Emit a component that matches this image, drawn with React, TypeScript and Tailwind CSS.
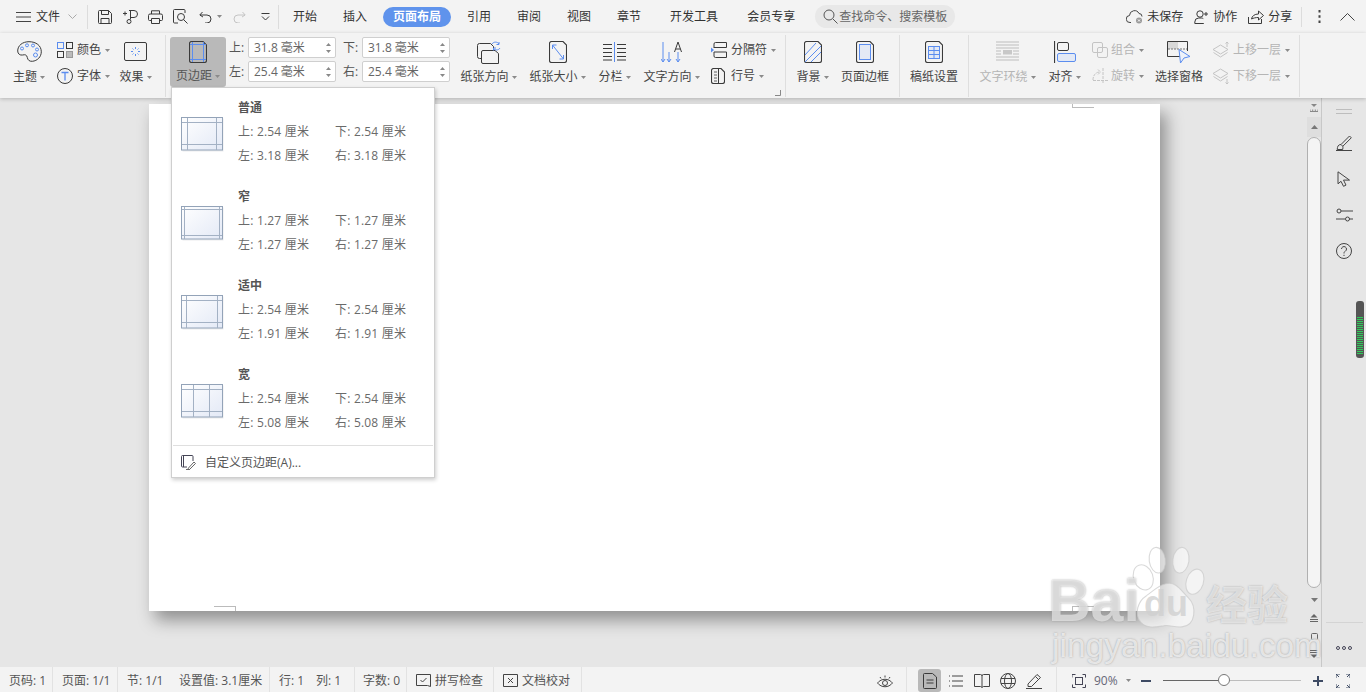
import React from "react";

const B = "#5b8def";
const D = "#3a3a3a";

function Ic({ w, h, children, className = "" }: { w: number; h: number; children: React.ReactNode; className?: string }) {
  return (
    <svg width={w} height={h} viewBox={`0 0 ${w} ${h}`} fill="none" stroke={D} strokeWidth={1} className={`shrink-0 ${className}`}>
      {children}
    </svg>
  );
}

function Caret({ className = "" }: { className?: string }) {
  return (
    <svg width="5" height="3" viewBox="0 0 5 3" className={`shrink-0 ${className}`}>
      <path d="M0 0h5L2.5 3z" fill="#8a8a8a" />
    </svg>
  );
}

function Big({ label, caret, icon, className = "", off }: { label: string; caret?: boolean; icon: React.ReactNode; className?: string; off?: boolean }) {
  return (
    <div className={`flex flex-col items-center shrink-0 ${className}`}>
      <div className="h-[26px] mt-[8px] flex items-start justify-center">{icon}</div>
      <div className={`mt-[1px] h-[18px] flex items-center gap-[3px] whitespace-nowrap ${off ? "text-[#b5b5b5]" : "text-[#444]"}`}>
        {label}
        {caret && <Caret />}
      </div>
    </div>
  );
}

function Small({ label, icon, caret = true, off }: { label: string; icon: React.ReactNode; caret?: boolean; off?: boolean }) {
  return (
    <div className={`h-[18px] flex items-center whitespace-nowrap ${off ? "text-[#b5b5b5]" : "text-[#444]"}`}>
      <div className="w-[20px] flex items-center">{icon}</div>
      {label}
      {caret && <Caret className="ml-[4px]" />}
    </div>
  );
}

function Sep({ className = "" }: { className?: string }) {
  return <div className={`w-px h-[62px] mt-[2px] bg-[#dedede] shrink-0 ${className}`} />;
}

function Spin({ label, value }: { label: string; value: string }) {
  return (
    <div className="flex items-center h-[21px]">
      <span className="w-[19px] text-[#555] pt-[1px]">{label}</span>
      <div className="w-[88px] h-[21px] bg-white border border-[#cfcfcf] rounded-[2px] flex items-center pl-[5px] pr-[4px] text-[#666]">
        <span className="flex-1 whitespace-nowrap pt-[1px]">{value}</span>
        <div className="flex flex-col gap-[4px]">
          <svg width="5" height="3"><path d="M0 3h5L2.5 0z" fill="#888" /></svg>
          <svg width="5" height="3"><path d="M0 0h5L2.5 3z" fill="#888" /></svg>
        </div>
      </div>
    </div>
  );
}

function Tab({ children, className = "" }: { children: React.ReactNode; className?: string }) {
  return <div className={`text-[#333] whitespace-nowrap shrink-0 ${className}`}>{children}</div>;
}

function MarginThumb({ id, vx, hy }: { id: string; vx: [number, number]; hy: [number, number] }) {
  return (
    <svg width="44" height="36" viewBox="0 0 44 36" className="shrink-0">
      <defs>
        <linearGradient id={id} x1="0" y1="0" x2="1" y2="1">
          <stop offset="0" stopColor="#ffffff" />
          <stop offset="1" stopColor="#e3e9f6" />
        </linearGradient>
      </defs>
      <rect x="1.5" y="1.5" width="41" height="33" fill="#d8dade" opacity="0.5" />
      <rect x="0.5" y="0.5" width="41" height="32.5" fill={`url(#${id})`} stroke="#93a3b8" />
      <path d={`M${vx[0]}.5 1V33M${vx[1]}.5 1V33M1 ${hy[0]}.5H41M1 ${hy[1]}.5H41`} stroke="#a3b1c4" />
    </svg>
  );
}

function MarginItem({ id, title, t, l, vx, hy }: { id: string; title: string; t: string; l: string; vx: [number, number]; hy: [number, number] }) {
  return (
    <div className="h-[89px] flex pl-[9px] pt-[11px]">
      <div className="pt-[18px] w-[57px]">
        <MarginThumb id={id} vx={vx} hy={hy} />
      </div>
      <div className="flex flex-col text-[#6a6a6a]">
        <div className="h-[18px] leading-[18px] font-bold text-[#555]">{title}</div>
        <div className="mt-[6px] h-[18px] leading-[18px] flex tracking-[0.2px]">
          <span className="w-[97px]">上: {t} 厘米</span>
          <span>下: {t} 厘米</span>
        </div>
        <div className="mt-[6px] h-[18px] leading-[18px] flex tracking-[0.2px]">
          <span className="w-[97px]">左: {l} 厘米</span>
          <span>右: {l} 厘米</span>
        </div>
      </div>
    </div>
  );
}

function StatusSep({ className = "" }: { className?: string }) {
  return <div className={`w-px h-[25px] -mt-[2px] bg-[#e2e2e2] shrink-0 ${className}`} />;
}

function PageIcon({ children, w = 18, h = 22 }: { children?: React.ReactNode; w?: number; h?: number }) {
  return (
    <Ic w={w} h={h}>
      <path d={`M2.5.5H${w - 4}L${w - 0.5} 4V${h - 2.5}a2 2 0 0 1-2 2H2.5a2 2 0 0 1-2-2V2.5a2 2 0 0 1 2-2z`} strokeWidth="1.1" />
      {children}
    </Ic>
  );
}

export default function App() {
  return (
    <div className="relative w-[1366px] h-[692px] overflow-hidden flex flex-col bg-[#e6e6e6] text-[12px] font-['Open_Sans','Noto_Sans_CJK_SC',sans-serif]">
      {/* title row */}
      <div className="h-[33px] bg-[#f3f3f3] flex items-center shrink-0">
        <div className="ml-[16px]">
          <Ic w={15} h={12}><path d="M0 1.5h15M0 6h15M0 10.500h15" stroke="#444" /></Ic>
        </div>
        <Tab className="ml-[5px]">文件</Tab>
        <Ic w={9} h={5} className="ml-[8px]"><path d="M.5.5l4 4 4-4" stroke="#aaa" /></Ic>
        <div className="ml-[10px] w-px h-[24px] bg-[#dcdcdc]" />
        <Ic w={14} h={14} className="ml-[10px]"><path d="M1.500.5h9l3 3v9a1 1 0 0 1-1 1h-11a1 1 0 0 1-1-1v-11a1 1 0 0 1 1-1zM3.500.5v4h7v-4M3 13.500V8.500h8v5" /></Ic>
        <Ic w={16} h={15} className="ml-[11px]"><path d="M0 4.500h4M2 2.500v4M6 1.500h5a3.500 3.500 0 0 1 0 7H7.500M7.500 1.500v9" /><circle cx="6" cy="12.500" r="2" /></Ic>
        <Ic w={15} h={14} className="ml-[9px]"><path d="M3.500 4V.8h8V4M3.500 10.500h-2a1 1 0 0 1-1-1v-4a1.500 1.500 0 0 1 1.500-1.500h11a1.500 1.500 0 0 1 1.500 1.500v4a1 1 0 0 1-1 1h-2M3.500 8.500h8v5h-8z" /></Ic>
        <Ic w={16} h={15} className="ml-[10px]"><path d="M5 14H1.500a1 1 0 0 1-1-1V1.500a1 1 0 0 1 1-1H11a1 1 0 0 1 1 1V4" /><circle cx="8" cy="8" r="3.500" /><path d="M10.500 10.500l4 4" /></Ic>
        <Ic w={13} h={12} className="ml-[10px]"><path d="M3.500 1L.8 4l3.200 2M1 4h7a4 4 0 0 1 0 8H6" /></Ic>
        <Caret className="ml-[5px]" />
        <Ic w={13} h={12} className="ml-[11px]"><path d="M9.500 1L12.200 4 9 6M12 4H5a4 4 0 0 0 0 8h2" stroke="#c4c4c4" /></Ic>
        <Ic w={9} h={8} className="ml-[15px]"><path d="M.5.500h8" /><path d="M1 3.500l3.500 3.500L8 3.500" /></Ic>
        <div className="ml-[8px] w-px h-[24px] bg-[#dcdcdc]" />
        <Tab className="ml-[14px]">开始</Tab>
        <Tab className="ml-[26px]">插入</Tab>
        <div className="ml-[16px] w-[68px] h-[20px] rounded-full bg-[#5f93ec] text-white font-bold flex items-center justify-center shrink-0">页面布局</div>
        <Tab className="ml-[16px]">引用</Tab>
        <Tab className="ml-[26px]">审阅</Tab>
        <Tab className="ml-[26px]">视图</Tab>
        <Tab className="ml-[26px]">章节</Tab>
        <Tab className="ml-[29px]">开发工具</Tab>
        <Tab className="ml-[29px]">会员专享</Tab>
        <div className="ml-[20px] w-[140px] h-[23px] rounded-full bg-[#e8e8e8] flex items-center pl-[8px] text-[#666] shrink-0">
          <Ic w={15} h={15}><circle cx="6" cy="6" r="5" stroke="#555" /><path d="M10 10l4.500 4.500" stroke="#555" /></Ic>
          <span className="ml-[1px] whitespace-nowrap">查找命令、搜索模板</span>
        </div>
        <Ic w={18} h={15} className="ml-[171px]">
          <path d="M5 13.500H4a3.500 3.500 0 0 1-.5-7A5 5 0 0 1 13 4.500a3 3 0 0 1 3 3" stroke="#444" />
          <circle cx="13" cy="11.500" r="3" fill="#9a9a9a" stroke="none" />
          <path d="M12 10.500l2 2M14 10.500l-2 2" stroke="#fff" />
        </Ic>
        <Tab className="ml-[3px]">未保存</Tab>
        <Ic w={15} h={14} className="ml-[11px]"><circle cx="6" cy="4" r="3.200" /><path d="M.8 13.500v-1.500a4 4 0 0 1 4-4h2.500a4 4 0 0 1 2 .6M.8 13.500h9M12 2v4M10 4h4" /></Ic>
        <Tab className="ml-[4px]">协作</Tab>
        <Ic w={16} h={14} className="ml-[11px]"><path d="M.5 7v6.500h13V9M3.500 9c.5-3 3-5 7-5V1l5 4.500-5 4.500V7.500c-3 0-5 .5-7 1.500z" /></Ic>
        <Tab className="ml-[4px]">分享</Tab>
        <div className="ml-[9px] w-px h-[20px] bg-[#dcdcdc]" />
        <Ic w={3} h={13} className="ml-[16px]"><path d="M1.500 0v2.500M1.500 5.200v2.500M1.500 10.500v2.500" strokeWidth="2" stroke="#444" /></Ic>
        <Ic w={15} h={8} className="ml-[19px]"><path d="M.5 7.500l7-7 7 7" stroke="#444" /></Ic>
      </div>

      {/* ribbon */}
      <div className="relative z-10 h-[65px] bg-[#f3f3f3] flex shrink-0 shadow-[0_1px_4px_rgba(0,0,0,0.22)]">
        <Big
          className="ml-[9px] w-[40px]"
          label="主题"
          caret
          icon={
            <Ic w={25} h={21}>
              <path d="M12 .7C5.500.7.700 4.500.700 10c0 3 2.500 4.500 4.800 4 3-.7 4.300 0 4.800 2.500.5 2.500 2 4 5 3.800 5-.4 9-4.500 9-9.500C24.300 4.500 19 .7 12 .7z" />
              <circle cx="5" cy="7.500" r="1.500" stroke={B} /><circle cx="10" cy="4.300" r="1.500" stroke={B} />
              <circle cx="16" cy="4.500" r="1.500" stroke={B} /><circle cx="20" cy="8.500" r="1.500" stroke={B} />
              <circle cx="18.500" cy="14" r="2" stroke={B} />
            </Ic>
          }
        />
        <div className="ml-[8px] w-[57px] pt-[8px] flex flex-col gap-[8px] shrink-0">
          <Small
            label="颜色"
            icon={
              <Ic w={16} h={16}>
                <rect x=".5" y=".5" width="6" height="6" stroke={B} /><rect x="9.500" y=".5" width="6" height="6" />
                <rect x=".5" y="9.500" width="6" height="6" /><rect x="9.500" y="9.500" width="6" height="6" fill="#bbb" stroke="#999" />
              </Ic>
            }
          />
          <Small
            label="字体"
            icon={
              <Ic w={16} h={16}>
                <circle cx="8" cy="8" r="7.500" />
                <path d="M4.500 4.500h7M8 4.500v8" stroke={B} strokeWidth="1.300" />
              </Ic>
            }
          />
        </div>
        <Big
          className="ml-[2px] w-[39px]"
          label="效果"
          caret
          icon={
            <Ic w={23} h={20}>
              <rect x=".5" y="1.500" width="22" height="18" rx="1.500" />
              <path d="M11.500 6v2M11.500 13v2M7 10.500h2M14 10.500h2M8.500 7.500l1 1M13.500 12.500l1 1M14.500 7.500l-1 1M9.500 12.500l-1 1" stroke={B} />
            </Ic>
          }
        />
        <Sep className="ml-[10px]" />
        <div className="ml-[4px] mt-[4px] w-[56px] h-[50px] rounded-[3px] bg-[#b9b9b9] flex flex-col items-center shrink-0">
          <div className="mt-[4px]">
            <PageIcon>
              <path d="M3.500 1v20M14.500 1v20M1 3.500h16M1 18.500h16" stroke={B} />
            </PageIcon>
          </div>
          <div className="mt-[4px] h-[18px] flex items-center gap-[3px] text-[#555] whitespace-nowrap">
            页边距
            <Caret />
          </div>
        </div>
        <div className="ml-[3px] mt-[4px] flex flex-col gap-[3px] shrink-0">
          <div className="flex gap-[7px]">
            <Spin label="上:" value="31.8 毫米" />
            <Spin label="下:" value="31.8 毫米" />
          </div>
          <div className="flex gap-[7px]">
            <Spin label="左:" value="25.4 毫米" />
            <Spin label="右:" value="25.4 毫米" />
          </div>
        </div>
        <Big
          className="ml-[10px] w-[57px]"
          label="纸张方向"
          caret
          icon={
            <Ic w={24} h={23}>
              <path d="M2.500 2.500h11l3 3v12h-14a2 2 0 0 1-2-2v-11a2 2 0 0 1 2-2z" />
              <path d="M6 9.500h12l3.500 3v10H6a1.500 1.500 0 0 1-1.500-1.500V11A1.500 1.500 0 0 1 6 9.500z" fill="#f3f3f3" />
              <path d="M15 3c1.500-2.500 5.500-2.500 7 0M22 1v2.500h-2.500M23 7c-1.500 2.500-5 2.500-6.500.5M16.500 9.500V7h2.500" stroke={B} />
            </Ic>
          }
        />
        <Big
          className="ml-[12px] w-[57px]"
          label="纸张大小"
          caret
          icon={
            <PageIcon h={22}>
              <path d="M3.500 4l11 14M3.500 4v4M3.500 4h4M14.500 18h-4M14.500 18v-4" stroke={B} />
            </PageIcon>
          }
        />
        <Big
          className="ml-[12px] w-[33px]"
          label="分栏"
          caret
          icon={
            <Ic w={23} h={21}>
              <path d="M0 3.500h9M0 7.500h9M0 11.500h9M0 15.500h9M0 19h9M14 3.500h9M14 7.500h9M14 11.500h9M14 15.500h9M14 19h9" />
              <path d="M11.500 1v20" stroke={B} />
            </Ic>
          }
        />
        <Big
          className="ml-[12px] w-[57px]"
          label="文字方向"
          caret
          icon={
            <Ic w={22} h={22}>
              <path d="M2 1v20M0 18l2 3 2-3M8 11v10M6 18l2 3 2-3M17 11v10M15 18l2 3 2-3" stroke={B} />
              <path d="M13.500 11l3.500-10 3.500 10M14.800 8h4.500" />
            </Ic>
          }
        />
        <div className="ml-[11px] w-[74px] pt-[8px] flex flex-col gap-[8px] shrink-0 relative">
          <Small
            label="分隔符"
            icon={
              <Ic w={16} h={16}>
                <path d="M3 6V2a1.500 1.500 0 0 1 1.500-1.500H15.500V5.500H3M3 10h12.500v5.500H4.500A1.500 1.500 0 0 1 3 14z" />
                <path d="M0 5.500l3 2.500-3 2.500z" fill={B} stroke="none" />
              </Ic>
            }
          />
          <Small
            label="行号"
            icon={
              <PageIcon w={14} h={16}>
                <path d="M3 4h3M3 7h3M3 10h3M3 13h3" strokeWidth=".8" />
                <path d="M7.500 1v14" />
              </PageIcon>
            }
          />
          <svg width="6" height="6" className="absolute left-[64px] top-[57px]"><path d="M5.500 0v5.500H0" fill="none" stroke="#888" /></svg>
        </div>
        <Sep />
        <Big
          className="ml-[10px] w-[33px]"
          label="背景"
          caret
          icon={
            <PageIcon>
              <path d="M1 14L12 2M1 21L17 5M7 21L17 11" stroke={B} />
            </PageIcon>
          }
        />
        <Big
          className="ml-[12px] w-[48px]"
          label="页面边框"
          icon={
            <PageIcon>
              <rect x="3.500" y="3.500" width="11" height="15" fill="#e3e9f5" stroke={B} />
            </PageIcon>
          }
        />
        <Sep className="ml-[10px]" />
        <Big
          className="ml-[10px] w-[48px]"
          label="稿纸设置"
          icon={
            <PageIcon>
              <rect x="3.500" y="5.500" width="11" height="12" fill="#e3e9f5" stroke={B} />
              <path d="M3.500 9.500h11M3.500 13.500h11M9 5.500v12" stroke={B} />
            </PageIcon>
          }
        />
        <Sep className="ml-[10px]" />
        <Big
          className="ml-[10px] w-[57px]"
          off
          label="文字环绕"
          caret
          icon={
            <Ic w={23} h={20}>
              <path d="M0 1h23M0 4h23M0 7h23M0 10h5M17 10h6M0 13h5M17 13h6M0 16h23M0 19h23" stroke="#bdbdbd" />
              <path d="M7 9h9v4.500H7z" fill="#c8c8c8" stroke="none" />
            </Ic>
          }
        />
        <Big
          className="ml-[12px] w-[33px]"
          label="对齐"
          caret
          icon={
            <Ic w={22} h={22}>
              <path d="M.5 0v22" strokeWidth="1.200" />
              <rect x="3.500" y="1.500" width="11" height="8" rx="1.500" />
              <rect x="3.500" y="12.500" width="18" height="8" rx="1.500" fill="#e3e9f5" stroke={B} />
            </Ic>
          }
        />
        <div className="ml-[11px] w-[52px] pt-[8px] flex flex-col gap-[8px] shrink-0">
          <Small
            off
            label="组合"
            icon={
              <Ic w={16} h={16}>
                <rect x=".5" y=".5" width="10" height="10" rx="1.500" stroke="#c4c4c4" />
                <rect x="5.500" y="5.500" width="10" height="10" rx="1.500" stroke="#c4c4c4" />
              </Ic>
            }
          />
          <Small
            off
            label="旋转"
            icon={
              <Ic w={16} h={16}>
                <path d="M1 12c0-5 3-8 7-8M6 1.500L8.500 4 6 6.500M1 12.500h15M11 0v16" stroke="#c4c4c4" strokeDasharray="3 1" />
              </Ic>
            }
          />
        </div>
        <Big
          className="ml-[11px] w-[48px]"
          label="选择窗格"
          icon={
            <Ic w={24} h={23}>
              <path d="M13 15.500H.5V.5h20V10" />
              <path d="M1 1h10v7H1z" fill="#d8d8d8" stroke="none" />
              <path d="M1 8h19" strokeDasharray="2 1" stroke="#777" />
              <path d="M12 8.500l11 7-6 1.500-3.500 5z" fill="#eef2fa" stroke={B} />
            </Ic>
          }
        />
        <div className="ml-[10px] w-[80px] pt-[8px] flex flex-col gap-[8px] shrink-0">
          <Small
            off
            label="上移一层"
            icon={
              <Ic w={17} h={16}>
                <path d="M7.500 3L15 7.500 7.500 12 0 7.500zM.5 10.500l7 4.500 7-4.500M14 5V0M12.500 1.500L14 0l1.500 1.500" stroke="#c4c4c4" />
              </Ic>
            }
          />
          <Small
            off
            label="下移一层"
            icon={
              <Ic w={17} h={16}>
                <path d="M7.500 1L15 5.500 7.500 10 0 5.500zM.5 8.500l7 4.500 7-4.500M14 11v5M12.500 14.500L14 16l1.500-1.500" stroke="#c4c4c4" />
              </Ic>
            }
          />
        </div>
        <Sep className="ml-[6px]" />
      </div>

      {/* document area */}
      <div className="flex flex-1 min-h-0">
        <div className="w-[1307px] shrink-0 pt-[6px] pl-[149px]">
          <div className="relative w-[1011px] h-[507px] bg-white shadow-[6px_9px_16px_rgba(0,0,0,0.38)]">
            <div className="absolute left-[923px] top-0 w-[22px] h-[4px] border-l border-b border-[#bbb]" />
            <div className="absolute left-[65px] top-[502px] w-[22px] h-[5px] border-r border-t border-[#bbb]" />
            <div className="absolute left-[923px] top-[502px] w-[22px] h-[5px] border-l border-t border-[#bbb]" />
          </div>
        </div>
        <div className="w-[15px] shrink-0 border-r border-[#c8c8c8] flex flex-col items-center">
          <div className="h-[19px] flex items-center">
            <Ic w={8} h={8}><path d="M1 0h6L4 3z" fill="#888" stroke="none" /><path d="M0 5.500v2h8v-2M2.700 5.500v2M5.300 5.500v2" stroke="#888" /></Ic>
          </div>
          <div className="w-full h-[20px] bg-[#dedede] flex items-center justify-center">
            <svg width="7" height="4"><path d="M0 4h7L3.500 0z" fill="#777" /></svg>
          </div>
          <div className="w-[14px] h-[451px] bg-[#f4f4f4] border border-[#b0b0b0] rounded-[7px]" />
          <div className="mt-[3px] flex flex-col items-center">
            <div className="h-[18px] flex items-center">
              <svg width="7" height="4"><path d="M0 0h7L3.500 4z" fill="#777" /></svg>
            </div>
            <div className="h-[18px] flex items-center">
              <Ic w={8} h={8}><path d="M4 0l3.500 3.500h-7z" fill="#666" stroke="none" /><path d="M0 5.500h8M0 7.500h8" stroke="#666" /></Ic>
            </div>
            <div className="h-[18px] flex items-center">
              <Ic w={7} h={7}><rect x=".5" y=".5" width="6" height="6" rx="1" stroke="#666" /></Ic>
            </div>
            <div className="h-[18px] flex items-center">
              <Ic w={8} h={8}><path d="M0 .5h8M0 2.500h8" stroke="#666" /><path d="M4 8L.5 4.500h7z" fill="#666" stroke="none" /></Ic>
            </div>
          </div>
        </div>
        <div className="relative flex-1 flex flex-col items-center">
          <div className="h-[27px] flex items-center">
            <Ic w={16} h={5}><path d="M0 .5h16M0 4.500h16" stroke="#bdbdbd" /></Ic>
          </div>
          <div className="h-[36px] flex items-center">
            <Ic w={16} h={16}><path d="M5 9.500L13.500 1l1.800 1.800-8.500 8.500zM5 9.500c-3 0-3.500 2-3.800 5h5.500c.3-1.500.3-2.300.1-3.200M0 15.500h16" stroke="#444" /></Ic>
          </div>
          <div className="h-[36px] flex items-center">
            <Ic w={14} h={16}><path d="M1 .8v12l3-2.500 2.500 5 2.500-1.200-2.500-5h6z" stroke="#444" /></Ic>
          </div>
          <div className="h-[36px] flex items-center">
            <Ic w={17} h={14}><circle cx="3" cy="3" r="2" stroke="#444" /><path d="M5 3h12M0 11h9M13 11h4" stroke="#444" /><circle cx="11.500" cy="11" r="2" stroke="#444" /></Ic>
          </div>
          <div className="h-[36px] flex items-center">
            <Ic w={16} h={16}>
              <circle cx="8" cy="8" r="7.500" stroke="#444" />
              <path d="M5.500 6a2.500 2.500 0 1 1 3.800 2.200C8.300 8.800 8 9.300 8 10.500M8 11.800v1.200" stroke="#444" />
            </Ic>
          </div>
          <div className="absolute left-[34px] top-[203px] w-[8px] h-[57px] rounded-[3px] bg-[#555] overflow-hidden">
            <div className="mt-[16px] mx-[1px] h-[38px] bg-[repeating-linear-gradient(to_bottom,#2ecc5a_0,#2ecc5a_1px,#555_1px,#555_2px)]" />
          </div>
          <div className="mt-auto w-[37px] h-px bg-[#d4d4d4]" />
          <div className="h-[44px] flex items-center pt-[6px]">
            <Ic w={16} h={4}><g stroke="#445"><circle cx="2" cy="2" r="1.500" /><circle cx="8" cy="2" r="1.500" /><circle cx="14" cy="2" r="1.500" /></g></Ic>
          </div>
        </div>
      </div>

      {/* status bar */}
      <div className="h-[25px] pt-[2px] bg-[#f3f3f3] flex items-center shrink-0 text-[#555] whitespace-nowrap">
        <span className="ml-[9px] w-[43px]">页码: 1</span>
        <StatusSep />
        <span className="ml-[9px] w-[55px]">页面: 1/1</span>
        <StatusSep />
        <span className="ml-[9px] w-[52px]">节: 1/1</span>
        <span className="w-[90px]">设置值: 3.1厘米</span>
        <StatusSep />
        <span className="ml-[9px] w-[37px]">行: 1</span>
        <span className="w-[38px]">列: 1</span>
        <StatusSep />
        <span className="ml-[8px] w-[43px]">字数: 0</span>
        <StatusSep />
        <Ic w={15} h={15} className="ml-[9px]"><path d="M.5 1.500h14v12l-3-1H.5zM4.500 7l2 2 4-4" stroke="#444" /></Ic>
        <span className="ml-[4px] w-[58px]">拼写检查</span>
        <StatusSep />
        <Ic w={15} h={15} className="ml-[9px]"><path d="M.5 1.500h14v12h-14zM5 5l5 5M10 5l-5 5" stroke="#444" /></Ic>
        <span className="ml-[4px] w-[59px]">文档校对</span>
        <StatusSep />
        <Ic w={16} h={14} className="ml-[295px]">
          <path d="M.5 9c4-5 11-5 15 0-4 5-11 5-15 0z" stroke="#444" /><circle cx="8" cy="9" r="2.500" stroke="#444" />
          <path d="M3 3l1 1.500M8 1.500v2M13 3l-1 1.500" stroke="#444" />
        </Ic>
        <StatusSep className="ml-[13px]" />
        <div className="ml-[11px] w-[23px] h-[23px] rounded-[3px] bg-[#b9b9b9] flex items-center justify-center shrink-0">
          <Ic w={14} h={16}><path d="M1.500.5h8l4 3.500v10.500a1 1 0 0 1-1 1h-11a1 1 0 0 1-1-1v-13a1 1 0 0 1 1-1zM3.500 7h7M3.500 10h7" /></Ic>
        </div>
        <Ic w={14} h={12} className="ml-[8px]"><path d="M3 1h11M3 6h11M3 11h11M0 1h1M0 6h1M0 11h1" stroke="#444" /></Ic>
        <Ic w={16} h={14} className="ml-[11px]"><path d="M.5.5h6a1.500 1.500 0 0 1 1.500 1.500 1.500 1.500 0 0 1 1.500-1.500h6v12H9.500L8 13.500 6.500 12.500H.5zM8 2v11" stroke="#444" /></Ic>
        <Ic w={16} h={16} className="ml-[10px]"><circle cx="8" cy="8" r="7.500" stroke="#444" /><ellipse cx="8" cy="8" rx="3.500" ry="7.500" stroke="#444" /><path d="M1 5.500h14M1 10.500h14" stroke="#444" /></Ic>
        <Ic w={16} h={16} className="ml-[10px]"><path d="M2 11L11 1.500l3.500 3L5.500 13.500H2zM9.500 3.500l3 3M0 15.500h16" stroke="#444" /></Ic>
        <StatusSep className="ml-[14px]" />
        <Ic w={14} h={14} className="ml-[15px]"><path d="M0 3.500V.5h3.500M10.500.5H13.500v3M13.500 10.500v3H10.500M3.500 13.500H.5v-3" stroke="#445" /><rect x="3.500" y="3.500" width="7" height="7" stroke="#445" /></Ic>
        <span className="ml-[8px] w-[29px] text-[#667]">90%</span>
        <Caret className="ml-[3px]" />
        <div className="ml-[10px] w-[10px] h-[2px] bg-[#3d4a63] shrink-0" />
        <div className="ml-[12px] relative w-[138px] h-px bg-[#bdbdbd] shrink-0">
          <div className="w-[56px] h-px bg-[#666]" />
          <div className="absolute left-[55px] top-[-6px] w-[12px] h-[12px] rounded-full bg-white border border-[#777]" />
        </div>
        <Ic w={10} h={10} className="ml-[12px]"><path d="M0 5h10M5 0v10" stroke="#3d4a63" strokeWidth="2" /></Ic>
        <Ic w={14} h={14} className="ml-[13px]"><path d="M0 4V0h4M10 0h4v4M14 10v4h-4M4 14H0v-4M0 0l3 3M14 0l-3 3M14 14l-3-3M0 14l3-3" stroke="#3d4a63" /></Ic>
      </div>

      {/* margins dropdown */}
      <div className="absolute z-20 left-[171px] top-[87px] w-[264px] h-[391px] bg-white border border-[#cfcfcf] shadow-[1px_2px_4px_rgba(0,0,0,0.2)] flex flex-col">
        <MarginItem id="m1" title="普通" t="2.54" l="3.18" vx={[6, 35]} hy={[5, 27]} />
        <MarginItem id="m2" title="窄" t="1.27" l="1.27" vx={[3, 38]} hy={[3, 29]} />
        <MarginItem id="m3" title="适中" t="2.54" l="1.91" vx={[5, 36]} hy={[5, 27]} />
        <MarginItem id="m4" title="宽" t="2.54" l="5.08" vx={[12, 28]} hy={[5, 27]} />
        <div className="mt-[1px] mx-[1px] h-px bg-[#dfdfdf]" />
        <div className="flex-1 flex items-center pl-[9px] pt-[2px] text-[#555]">
          <Ic w={15} h={15}><path d="M12 6V1.500a1 1 0 0 0-1-1H1.500a1 1 0 0 0-1 1V11a1 1 0 0 0 1 1H6M2.500 1v11" stroke="#445" /><path d="M7 13.500L13 7l1.500 1.500-6 6zM5 14.500h4" stroke="#666" /></Ic>
          <span className="ml-[9px]">自定义页边距(A)...</span>
        </div>
      </div>

      {/* watermark */}
      <div className="absolute z-30 inset-0 pointer-events-none overflow-hidden font-['Liberation_Sans',sans-serif]">
        <svg width="76" height="86" viewBox="0 0 70 80" className="absolute left-[1130px] top-[543px]">
          <g fill="#ffffff" fillOpacity="0.55" stroke="#c9c9c9" strokeOpacity="0.7">
            <ellipse cx="12" cy="32" rx="9" ry="12" transform="rotate(-20 12 32)" />
            <ellipse cx="25" cy="16" rx="7.500" ry="12" transform="rotate(-8 25 16)" />
            <ellipse cx="47" cy="16" rx="7.500" ry="12" transform="rotate(8 47 16)" />
            <ellipse cx="60" cy="36" rx="8" ry="12" transform="rotate(18 60 36)" />
            <path d="M33 38c9-3 14 6 21 13 8 8 7 26-6 27-7 .6-12-2-17-1-7 1-15 3-21-3-7-8-3-20 5-25 6-4 10-9 18-11z" />
          </g>
        </svg>
        <span className="absolute left-[1048px] top-[576px] text-[59px] leading-[51px] font-bold text-white/55 [text-shadow:0_0_2px_rgba(150,150,150,0.8)]">Bai</span>
        <span className="absolute left-[1144px] top-[584px] text-[36px] leading-[40px] text-[#d0d0d0]/80 font-bold">du</span>
        <span className="absolute left-[1206px] top-[578px] text-[41px] leading-[48px] font-bold text-white/60 font-['Noto_Sans_CJK_SC',sans-serif] [text-shadow:0_0_2px_rgba(150,150,150,0.8)]">经验</span>
        <span className="absolute left-[1052px] top-[628px] text-[33.500px] leading-[36px] text-white/70 [text-shadow:0_0_2px_rgba(140,140,140,0.8)]">jingyan.baidu.com</span>
      </div>
    </div>
  );
}
